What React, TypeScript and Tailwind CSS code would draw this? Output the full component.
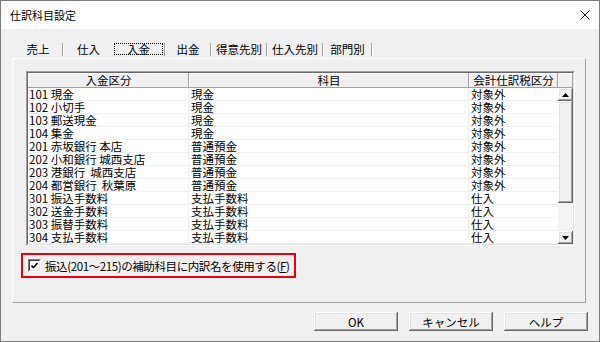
import React from "react";

interface Row {
  kubun: string;
  kamoku: string;
  zei: string;
}

const rows: Row[] = [
  { kubun: "101 現金", kamoku: "現金", zei: "対象外" },
  { kubun: "102 小切手", kamoku: "現金", zei: "対象外" },
  { kubun: "103 郵送現金", kamoku: "現金", zei: "対象外" },
  { kubun: "104 集金", kamoku: "現金", zei: "対象外" },
  { kubun: "201 赤坂銀行 本店", kamoku: "普通預金", zei: "対象外" },
  { kubun: "202 小和銀行 城西支店", kamoku: "普通預金", zei: "対象外" },
  { kubun: "203 港銀行  城西支店", kamoku: "普通預金", zei: "対象外" },
  { kubun: "204 都営銀行  秋葉原", kamoku: "普通預金", zei: "対象外" },
  { kubun: "301 振込手数料", kamoku: "支払手数料", zei: "仕入" },
  { kubun: "302 送金手数料", kamoku: "支払手数料", zei: "仕入" },
  { kubun: "303 振替手数料", kamoku: "支払手数料", zei: "仕入" },
  { kubun: "304 支払手数料", kamoku: "支払手数料", zei: "仕入" },
];

// classic 3D raised edge
const raised =
  "bg-[#f0f0f0] shadow-[inset_-1px_-1px_0_#696969,inset_1px_1px_0_#ffffff,inset_-2px_-2px_0_#a0a0a0,inset_2px_2px_0_#e3e3e3]";
const headerCell =
  "h-[15px] leading-[15px] text-center bg-[#f0f0f0] shadow-[inset_-1px_-1px_0_#a0a0a0,inset_1px_1px_0_#ffffff] whitespace-nowrap";

const Sep = () => (
  <div className="w-[2px] h-[13px] border-l border-r border-l-[#a0a0a0] border-r-white" />
);

const Tab = ({ label, w, active }: { label: string; w: string; active?: boolean }) => (
  <div className={`${w} h-[14px] flex items-center justify-center`}>
    {active ? (
      <div className="w-full h-[12px] mx-[1px] flex items-center justify-center border border-dotted border-black leading-[11px]">
        {label}
      </div>
    ) : (
      <span className="leading-[12px]">{label}</span>
    )}
  </div>
);

const Button = ({ label }: { label: string }) => (
  <button className={`${raised} w-[84px] h-[19px] flex items-center justify-center text-[11.5px] leading-[12px] text-black`}>
    {label}
  </button>
);

export default function App() {
  return (
    <div className="w-[600px] h-[342px] border border-[#7a7a7a] bg-[#f0f0f0] flex flex-col text-black text-[11.5px] font-['Noto_Sans_CJK_JP',sans-serif] overflow-hidden">
      {/* title bar */}
      <div className="h-[28px] bg-white flex items-center justify-between pl-[9px] pr-[9px] shrink-0">
        <span className="text-[11px] leading-[12px]">仕訳科目設定</span>
        <svg width="10" height="10" viewBox="0 0 10 10">
          <path d="M0.5 0.5 L9.5 9.5 M9.5 0.5 L0.5 9.5" stroke="#111" strokeWidth="1" />
        </svg>
      </div>

      <div className="flex-1 flex flex-col pl-[11px] pt-[11px]">
        {/* tabs */}
        <div className="h-[18px] flex items-center pl-[2px]">
          <Tab label="売上" w="w-[48px]" />
          <Sep />
          <Tab label="仕入" w="w-[49px]" />
          <Tab label="入金" w="w-[51px]" active />
          <Sep />
          <Tab label="出金" w="w-[44px]" />
          <Sep />
          <Tab label="得意先別" w="w-[54px]" />
          <Sep />
          <Tab label="仕入先別" w="w-[54px]" />
          <Sep />
          <Tab label="部門別" w="w-[47px]" />
          <Sep />
        </div>

        {/* tab panel */}
        <div className="w-[574px] h-[245px] border border-t-white border-l-white border-b-[#a0a0a0] border-r-[#a0a0a0] pl-[13px] pt-[12px] flex flex-col">
          <div className="w-[549px] h-[175px] border border-t-[#a0a0a0] border-l-[#a0a0a0] border-b-white border-r-white">
            <div className="w-full h-full border border-t-[#696969] border-l-[#696969] border-b-[#e3e3e3] border-r-[#e3e3e3] bg-white flex flex-col">
              <div className="flex">
                <div className={`${headerCell} w-[161px]`}>入金区分</div>
                <div className={`${headerCell} w-[280px]`}>科目</div>
                <div className={`${headerCell} w-[89px]`}>会計仕訳税区分</div>
                <div className={`${headerCell} w-[15px]`} />
              </div>
              <div className="flex">
                <div className="w-[530px] flex flex-col">
                  {rows.map((r, i) => (
                    <div key={i} className="h-[13px] flex border-b border-[#f0f0f0] leading-[12px]">
                      <div className="w-[161px] pl-[1px] border-r border-[#f0f0f0] whitespace-pre">{r.kubun}</div>
                      <div className="w-[280px] pl-[2px] border-r border-[#f0f0f0] whitespace-pre">{r.kamoku}</div>
                      <div className="w-[89px] pl-[2px] whitespace-pre">{r.zei}</div>
                    </div>
                  ))}
                </div>
                {/* scrollbar */}
                <div className="w-[15px] h-[156px] flex flex-col bg-[#f4f4f4]">
                  <div className={`${raised} h-[13px] flex items-center justify-center`}>
                    <svg width="7" height="4" viewBox="0 0 7 4">
                      <path d="M3.5 0 L7 4 L0 4 Z" fill="#000" />
                    </svg>
                  </div>
                  <div className={`${raised} h-[102px]`} />
                  <div className="flex-1" />
                  <div className={`${raised} h-[13px] flex items-center justify-center`}>
                    <svg width="7" height="4" viewBox="0 0 7 4">
                      <path d="M0 0 L7 0 L3.5 4 Z" fill="#000" />
                    </svg>
                  </div>
                </div>
              </div>
            </div>
          </div>

          {/* highlighted checkbox */}
          <div className="mt-[7px] -ml-[5px] w-[275px] h-[25px] border-2 border-[#e60012] flex items-center pl-[5px]">
            <div className="w-[13px] h-[13px] shrink-0 border border-t-[#808080] border-l-[#808080] border-b-white border-r-white">
              <div className="w-full h-full border border-t-[#404040] border-l-[#404040] border-b-[#e3e3e3] border-r-[#e3e3e3] bg-white flex items-center justify-center">
                <svg width="7" height="7" viewBox="0 0 7 7">
                  <path d="M0.5 3.5 L2.5 5.5 L6.5 1" stroke="#000" strokeWidth="1.6" fill="none" />
                </svg>
              </div>
            </div>
            <span className="ml-[4px] leading-[14px] whitespace-nowrap tracking-[-0.4px]">
              振込(201～215)の補助科目に内訳名を使用する(<span className="underline">F</span>)
            </span>
          </div>
        </div>

        {/* buttons */}
        <div className="flex justify-end gap-[11px] pr-[11px] mt-[9px]">
          <Button label="OK" />
          <Button label="キャンセル" />
          <Button label="ヘルプ" />
        </div>
      </div>
    </div>
  );
}
